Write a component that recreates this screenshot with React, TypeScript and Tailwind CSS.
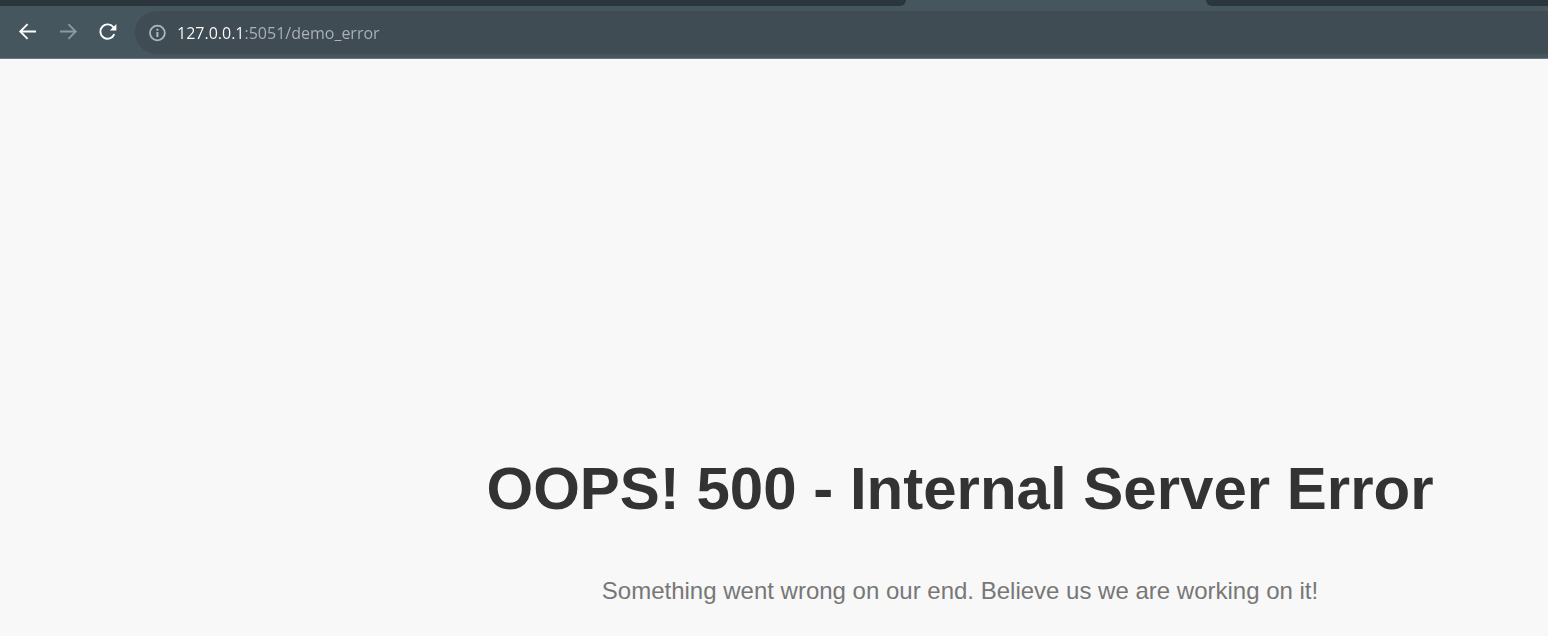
import { useState } from "react";

function ArrowIcon({ flipped = false }: { flipped?: boolean }) {
  return (
    <svg viewBox="0 0 24 24" className={flipped ? "size-6 -scale-x-100" : "size-6"} fill="none" stroke="currentColor" strokeWidth="1.8" aria-hidden="true">
      <path d="M20 11.5H4.2M11.6 4.2L4.2 11.5l7.4 7.4" />
    </svg>
  );
}

function ReloadIcon() {
  return (
    <svg viewBox="0 0 24 24" className="size-6" aria-hidden="true">
      <path d="M17.6 7.6A7.2 7.2 0 1 0 18.3 14.2" fill="none" stroke="currentColor" strokeWidth="1.9" />
      <path d="M20.4 4v6.6h-6.6z" fill="currentColor" />
    </svg>
  );
}

function InfoIcon() {
  return (
    <svg viewBox="0 0 24 24" className="size-6" aria-hidden="true">
      <circle cx="12.4" cy="12" r="7.4" fill="none" stroke="currentColor" strokeWidth="1.8" />
      <path d="M11.4 11.1h2v5h-2zM11.4 7.8h2v2h-2z" fill="currentColor" />
    </svg>
  );
}

function TabStrip() {
  return (
    <div className="flex h-[6px] bg-[#45565f]">
      <div className="w-[906px] rounded-br-lg bg-[#2b363c]" />
      <div className="w-[300px]" />
      <div className="flex-1 rounded-bl-lg bg-[#2b363c]" />
    </div>
  );
}

function Toolbar() {
  const [address, setAddress] = useState("127.0.0.1:5051/demo_error");
  return (
    <nav className="flex items-center border-b border-[#6b7881] bg-[#45565f] pt-[5px] pb-1 pl-2">
      <div className="flex pb-0.5 text-white">
        <button type="button" aria-label="Back" className="flex size-10 items-center justify-center">
          <ArrowIcon />
        </button>
        <button type="button" aria-label="Forward" disabled className="flex size-10 items-center justify-center text-[#8f999f]">
          <ArrowIcon flipped />
        </button>
        <button type="button" aria-label="Reload" className="flex size-10 items-center justify-center">
          <ReloadIcon />
        </button>
      </div>
      <div className="ml-[7px] flex h-[43px] flex-1 items-center rounded-l-full bg-[#404c53] pl-[10px]">
        <button type="button" aria-label="View site information" className="text-[#b0b7bb]">
          <InfoIcon />
        </button>
        <input
          type="text"
          aria-label="Address"
          spellCheck={false}
          value={address}
          onChange={(event) => setAddress(event.target.value)}
          className="ml-2 h-8 min-w-0 flex-1 bg-[linear-gradient(90deg,#ffffff_68px,#adb3b7_68px)] bg-clip-text font-['Open_Sans','Noto_Sans',sans-serif] text-base text-transparent caret-white outline-none"
        />
      </div>
    </nav>
  );
}

export default function App() {
  return (
    <div className="flex min-h-screen flex-col bg-[#f8f8f8]">
      <header>
        <TabStrip />
        <Toolbar />
      </header>
      <main className="flex-1 pt-[395px] pl-[372px] text-center font-['Liberation_Sans',Arial,sans-serif]">
        <h1 className="text-[60px] leading-[70px] font-bold text-[#333333]">OOPS! 500 - Internal Server Error</h1>
        <p className="mt-[53px] text-2xl leading-7 text-[#777777]">
          Something went wrong on our end. Believe us we are working on it!
        </p>
      </main>
    </div>
  );
}
